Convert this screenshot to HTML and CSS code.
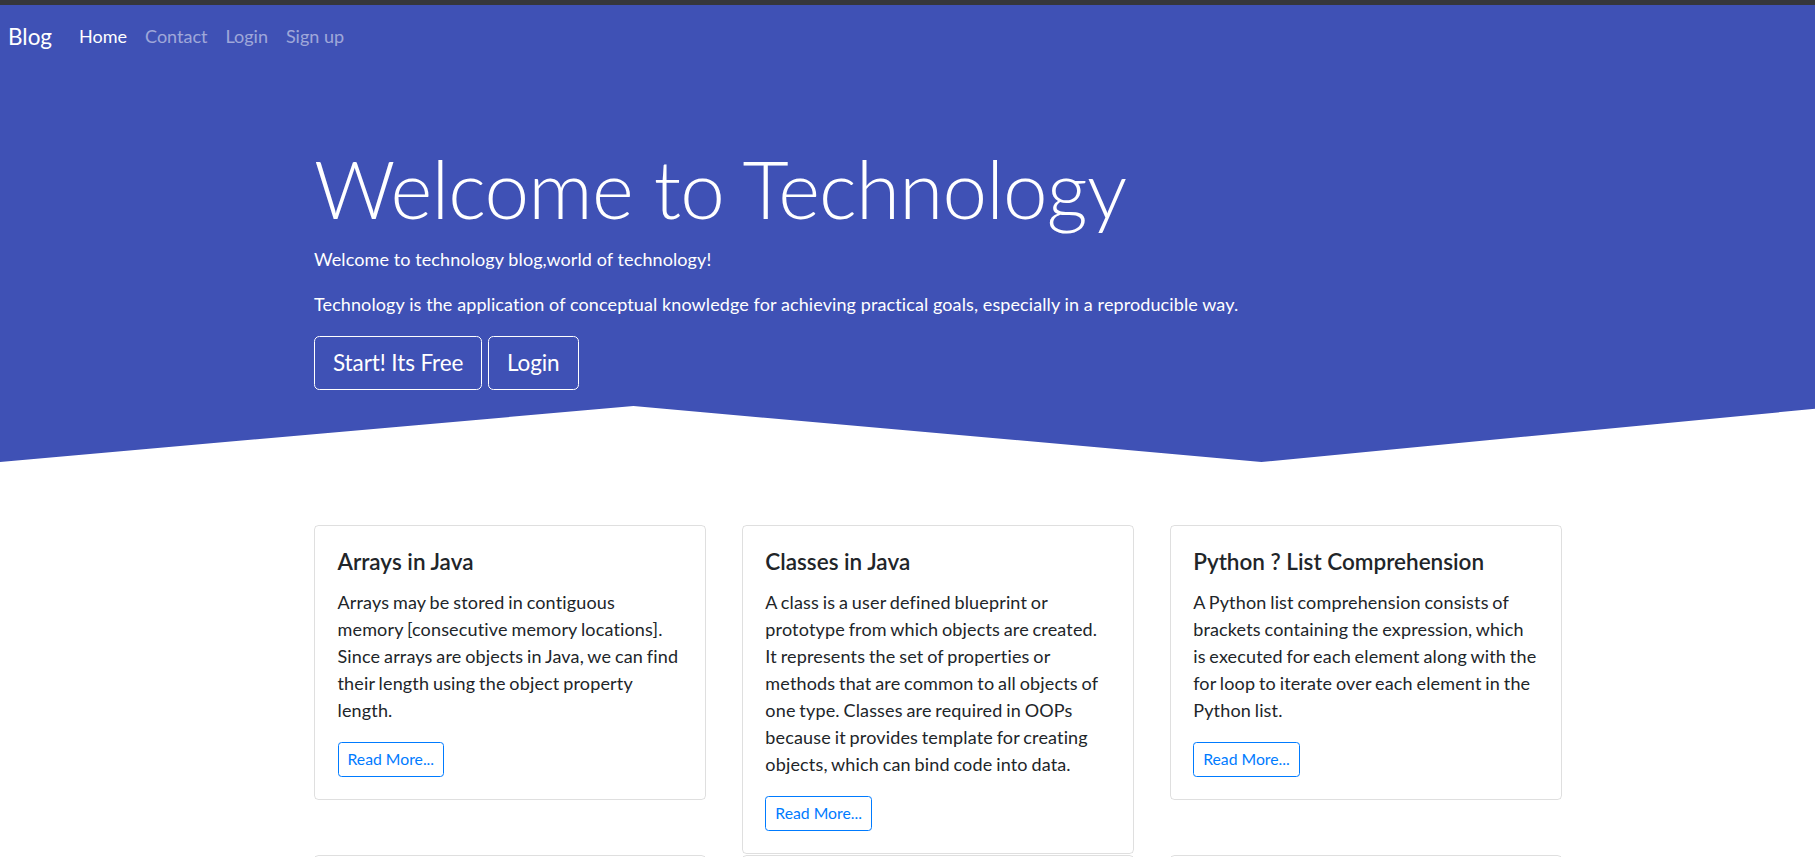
FILE: index.html
```html
<!DOCTYPE html>
<html lang="en">
<head>
<meta charset="utf-8">
<title>Blog</title>
<link rel="stylesheet" href="styles.css">
</head>
<body>
<div class="topbar"></div>
<nav class="navbar">
  <a class="brand" href="#">Blog</a>
  <ul class="nav-links">
    <li><a class="nav-link active" href="#">Home</a></li>
    <li><a class="nav-link" href="#">Contact</a></li>
    <li><a class="nav-link" href="#">Login</a></li>
    <li><a class="nav-link" href="#">Sign up</a></li>
  </ul>
</nav>
<header class="hero">
  <div class="container">
    <h1 class="display">Welcome to Technology</h1>
    <p>Welcome to technology blog,world of technology!</p>
    <p>Technology is the application of conceptual knowledge for achieving practical goals, especially in a reproducible way.</p>
    <div class="hero-actions">
      <a class="btn-outline-light" href="#">Start! Its Free</a>
      <a class="btn-outline-light" href="#">Login</a>
    </div>
  </div>
</header>
<main class="container posts">
  <article class="card">
    <h5 class="card-title">Arrays in Java</h5>
    <p class="card-text">Arrays may be stored in contiguous memory [consecutive memory locations]. Since arrays are objects in Java, we can find their length using the object property length.</p>
    <a class="btn-read" href="#">Read More...</a>
  </article>
  <article class="card">
    <h5 class="card-title">Classes in Java</h5>
    <p class="card-text">A class is a user defined blueprint or prototype from which objects are created. It represents the set of properties or methods that are common to all objects of one type. Classes are required in OOPs because it provides template for creating objects, which can bind code into data.</p>
    <a class="btn-read" href="#">Read More...</a>
  </article>
  <article class="card">
    <h5 class="card-title">Python ? List Comprehension</h5>
    <p class="card-text">A Python list comprehension consists of brackets containing the expression, which is executed for each element along with the for loop to iterate over each element in the Python list.</p>
    <a class="btn-read" href="#">Read More...</a>
  </article>
  <article class="card">
    <h5 class="card-title">Inheritance in Java</h5>
    <p class="card-text">Inheritance is an important pillar of OOP. It is the mechanism by which one class is allowed to inherit the features of another class.</p>
    <a class="btn-read" href="#">Read More...</a>
  </article>
  <article class="card">
    <h5 class="card-title">Python Dictionary</h5>
    <p class="card-text">Dictionary in Python is an unordered collection of data values, used to store data values like a map.</p>
    <a class="btn-read" href="#">Read More...</a>
  </article>
  <article class="card">
    <h5 class="card-title">Strings in Java</h5>
    <p class="card-text">Strings are objects that are backed internally by a char array. Since arrays are immutable, strings are immutable as well.</p>
    <a class="btn-read" href="#">Read More...</a>
  </article>
</main>
</body>
</html>
```
FILE: styles.css
```css
* { box-sizing: border-box; }

body {
  margin: 0;
  font-family: "Lato", "Liberation Sans", sans-serif;
  font-size: 18px;
  line-height: 27px;
  color: #212529;
  background: #fff;
}

a { text-decoration: none; }

.topbar {
  height: 5px;
  background: #36373b;
}

.navbar {
  display: flex;
  align-items: center;
  background: #3f51b5;
  padding: 9px 8px;
}

.brand {
  color: #fff;
  font-size: 22.5px;
  line-height: 33.75px;
  padding: 5.6px 0;
  margin-right: 18px;
}

.nav-links {
  display: flex;
  list-style: none;
  margin: 0;
  padding: 0;
}

.nav-link {
  display: block;
  padding: 9px 9px;
  color: rgba(255, 255, 255, 0.5);
}

.nav-link.active { color: #fff; }

.hero {
  background: #3f51b5;
  color: #fff;
  padding: 72px 0;
  clip-path: polygon(0 0, 100% 0, 100% 86.5%, 69.5% 100%, 34.9% 85.8%, 0 100%);
}

.container {
  width: 1248px;
  margin-left: 314px;
}

.display {
  font-size: 80px;
  font-weight: 300;
  line-height: 97.2px;
  letter-spacing: -0.8px;
  margin: 0 0 9px;
}

.hero p {
  margin: 0 0 18px;
  letter-spacing: 0.1px;
}

.hero-actions {
  display: flex;
  gap: 5.6px;
}

.btn-outline-light {
  display: inline-block;
  color: #fff;
  border: 1px solid #fff;
  border-radius: 5.4px;
  font-size: 22.5px;
  line-height: 33.75px;
  padding: 9px 18px;
  letter-spacing: -0.1px;
}

.posts {
  display: grid;
  grid-template-columns: repeat(3, 1fr);
  column-gap: 35.5px;
  row-gap: 1px;
  align-items: start;
  margin-top: 63px;
}

.card {
  border: 1px solid rgba(0, 0, 0, 0.125);
  border-radius: 4.5px;
  padding: 22.5px;
}

.card-title {
  font-size: 22.5px;
  font-weight: 600;
  line-height: 27px;
  margin: 0 0 13.5px;
}

.card-text {
  margin: 0 0 18px;
  letter-spacing: 0.16px;
  word-spacing: -1px;
}

.btn-read {
  display: inline-block;
  color: #007bff;
  border: 1px solid #007bff;
  border-radius: 3.6px;
  font-size: 15.75px;
  line-height: 23.6px;
  padding: 4.5px 9px;
}
```
